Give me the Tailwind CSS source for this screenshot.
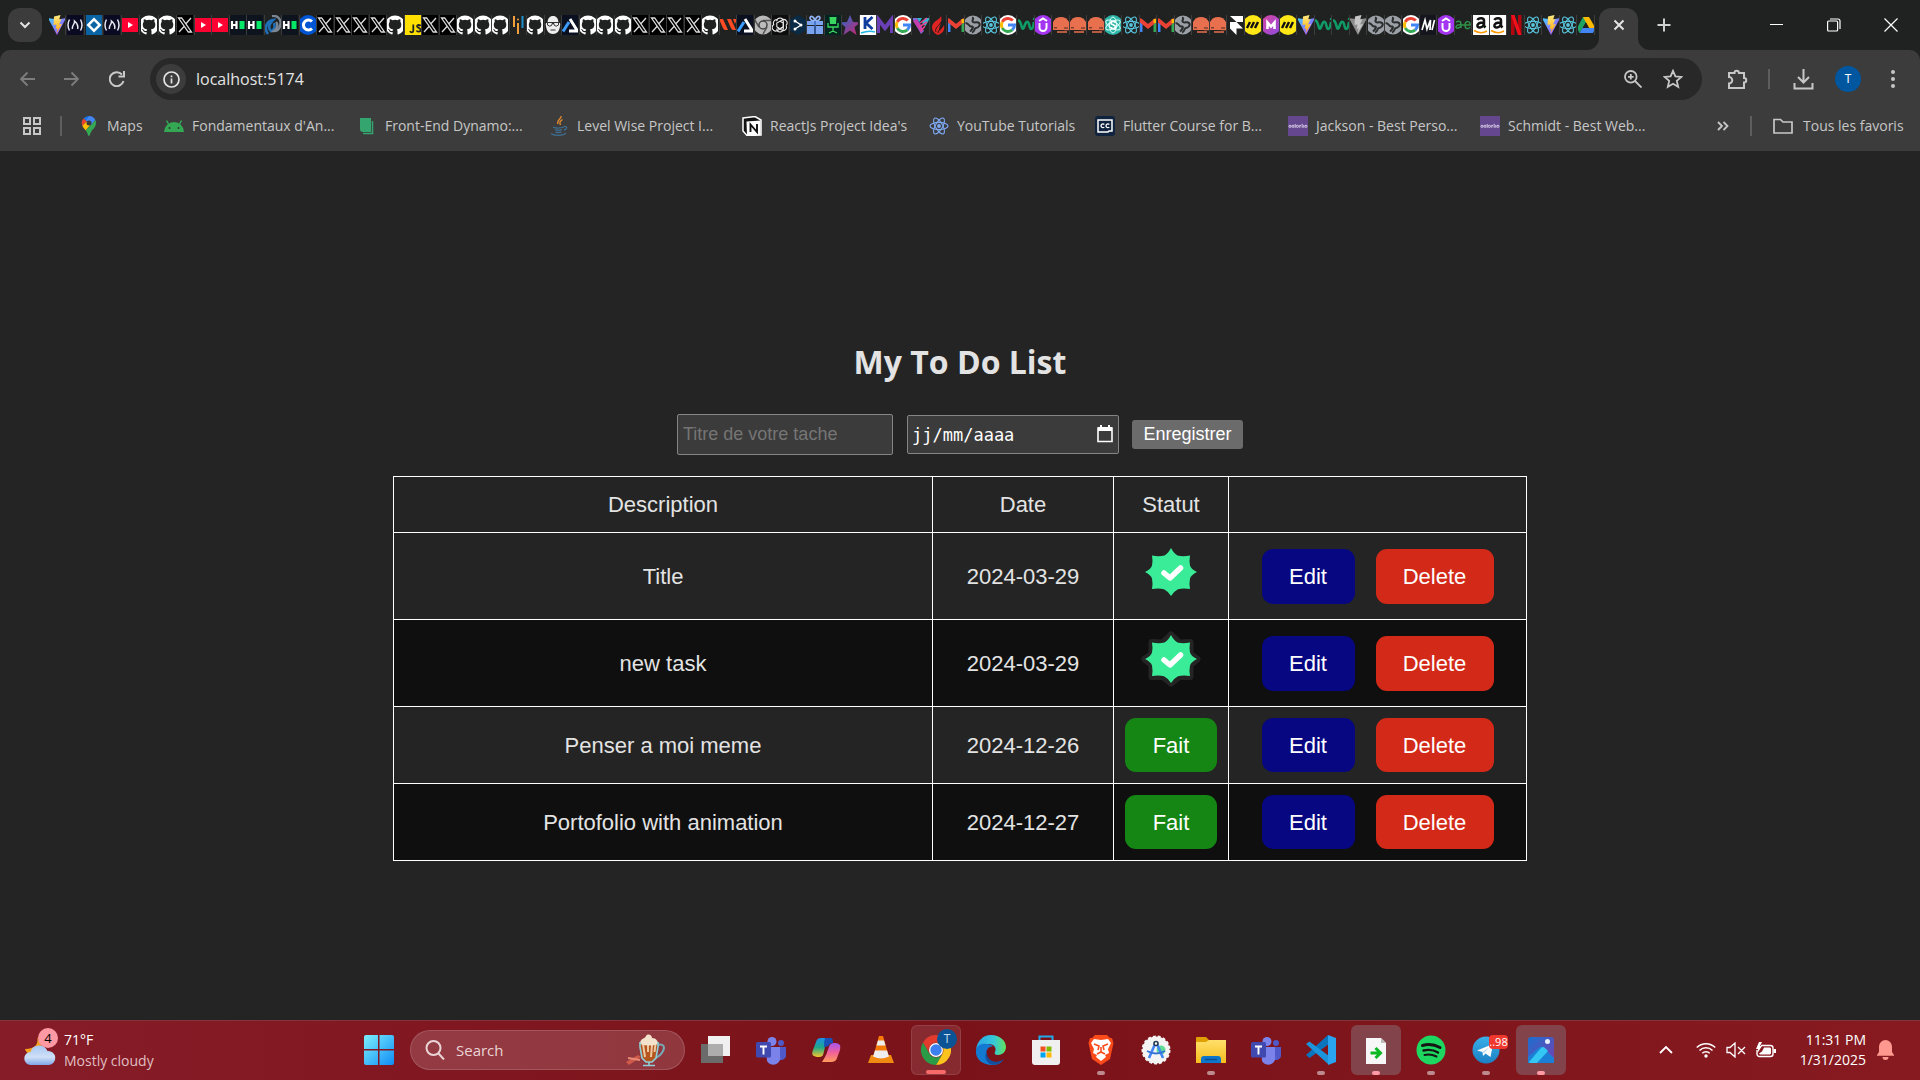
<!DOCTYPE html>
<html lang="fr">
<head>
<meta charset="utf-8">
<title>My To Do List</title>
<script src="https://cdn.jsdelivr.net/npm/@tailwindcss/browser@4"></script>
</head>
<body class="flex min-h-screen flex-col bg-[#242424] font-['Open_Sans','Noto_Sans',sans-serif] text-[#e3e3e3]">

<!-- Shared icon shapes -->
<svg class="absolute size-0" aria-hidden="true">
  <defs>
    <linearGradient id="gv" x1="0" y1="0" x2="1" y2="1"><stop offset="0" stop-color="#41d1ff"/><stop offset="1" stop-color="#bd34fe"/></linearGradient>
    <linearGradient id="gy" x1="0" y1="0" x2="0" y2="1"><stop offset="0" stop-color="#ffea83"/><stop offset="1" stop-color="#ffa800"/></linearGradient>
    <linearGradient id="gm" x1="0" y1="0" x2="1" y2="1"><stop offset="0" stop-color="#d946a0"/><stop offset="1" stop-color="#8b4be0"/></linearGradient>
    <linearGradient id="gs" x1="0" y1="0" x2="1" y2="1"><stop offset="0" stop-color="#1d6fd0"/><stop offset="1" stop-color="#d3206a"/></linearGradient>
    <linearGradient id="gw" gradientUnits="userSpaceOnUse" x1="0" y1="0" x2="30" y2="30"><stop offset="0" stop-color="#7df0fd"/><stop offset="1" stop-color="#0f8cf5"/></linearGradient>
    <linearGradient id="gc" x1="0" y1="0" x2="0" y2="1"><stop offset="0" stop-color="#a9c6f2"/><stop offset=".6" stop-color="#cfe0f7"/><stop offset="1" stop-color="#7fa5e8"/></linearGradient>
    <linearGradient id="gc1" x1="0" y1="0" x2="0" y2="1"><stop offset="0" stop-color="#1c8fe8"/><stop offset=".5" stop-color="#1fa98a"/><stop offset="1" stop-color="#f6c52c"/></linearGradient>
    <linearGradient id="gc2" x1="0" y1="0" x2="0" y2="1"><stop offset="0" stop-color="#a855f0"/><stop offset=".5" stop-color="#f0609a"/><stop offset="1" stop-color="#ff9d5c"/></linearGradient>
    <linearGradient id="ge" x1="0" y1="0" x2="1" y2="0"><stop offset="0" stop-color="#2aa5e8"/><stop offset=".6" stop-color="#35c8d8"/><stop offset="1" stop-color="#62e25a"/></linearGradient>
    <linearGradient id="gp" x1="0" y1="0" x2="1" y2="1"><stop offset="0" stop-color="#1b6fd0"/><stop offset="1" stop-color="#7a3fae"/></linearGradient>
    <linearGradient id="gf" x1="0" y1="0" x2="0" y2="1"><stop offset="0" stop-color="#ffdf6b"/><stop offset="1" stop-color="#f6bd1c"/></linearGradient>
    <linearGradient id="gt" x1="0" y1="0" x2="0" y2="1"><stop offset="0" stop-color="#38b0e8"/><stop offset="1" stop-color="#1b80c4"/></linearGradient>
  </defs>
  <symbol id="vite" viewBox="0 0 20 20"><path d="M1 3 10 20 19 3l-8 1.500z" fill="url(#gv)"/><path d="M13.500 0 7 1.500 6.500 10l3-.6-.8 4.600 2-.6-1.300 5L15 9l-3 .5L14.500 4l-2.300.5z" fill="url(#gy)"/></symbol>
  <symbol id="vitegray" viewBox="0 0 20 20"><path d="M1 3 10 20 19 3l-8 1.500z" fill="#8c8c8c"/><path d="M13.500 0 7 1.500 6.500 10l3-.6-.8 4.600 2-.6-1.300 5L15 9l-3 .5L14.500 4l-2.300.5z" fill="#c6c6c6"/></symbol>
  <symbol id="fcc" viewBox="0 0 20 20"><rect width="20" height="20" fill="#0a0a23"/><path d="M4.500 4.500q-3 5.500 0 11M15.500 4.500q3 5.500 0 11M7.500 14c-1-4 2.500-4 2-8 3 2.500 4 5 3 8" fill="none" stroke="#e8e8f0" stroke-width="1.500"/></symbol>
  <symbol id="code" viewBox="0 0 20 20"><rect width="20" height="20" fill="#0a64a4"/><path d="M10 2.500 17.500 10 10 17.500 2.500 10z" fill="#fff"/><path d="M10 6 14 10l-4 4-4-4z" fill="#0a64a4"/></symbol>
  <symbol id="yt" viewBox="0 0 20 20"><rect y="3" width="20" height="14" rx="2" fill="#f03"/><path d="M8 7v6l5-3z" fill="#fff"/></symbol>
  <symbol id="gh" viewBox="0 0 20 20"><path fill="#fff" d="M10 .4a9.800 9.800 0 0 0-3.100 19.100c.5.1.7-.2.700-.5v-2c-2.700.6-3.300-1.100-3.300-1.100-.4-1.100-1.100-1.400-1.100-1.400-.9-.6.1-.6.1-.6 1 .1 1.500 1 1.500 1 .9 1.500 2.300 1.100 2.900.8.100-.6.300-1.100.600-1.300-2.200-.3-4.500-1.100-4.500-4.900 0-1.100.4-2 1-2.700-.1-.2-.4-1.200.1-2.600 0 0 .8-.3 2.700 1a9.300 9.300 0 0 1 4.900 0c1.900-1.300 2.700-1 2.700-1 .5 1.400.2 2.400.1 2.600.6.7 1 1.600 1 2.700 0 3.800-2.300 4.600-4.500 4.900.4.300.7.900.7 1.800V19c0 .3.200.6.700.5A9.800 9.800 0 0 0 10 .4z"/></symbol>
  <symbol id="xx" viewBox="0 0 20 20"><rect width="20" height="20" fill="#000"/><path d="M3.500 3h3.200L16.500 17h-3.200zM16 3l-5.300 6M9 11.500 4 17" fill="none" stroke="#ddd" stroke-width="1.300"/></symbol>
  <symbol id="hh" viewBox="0 0 20 20"><rect width="20" height="20" fill="#0e141e"/><path d="M4 6v8M8.500 6v8M4 10h4.500" stroke="#fff" stroke-width="2.200"/><path d="M11.500 6h5v8h-5z" fill="#05e868"/></symbol>
  <symbol id="swirl" viewBox="0 0 20 20"><path d="M5 19C1 14 3 6 10 5c-4 4-5 8-2 11 4-1 4-5 3-8" fill="none" stroke="#1f6fb8" stroke-width="2.600"/><path d="M9 1c6-1 10 4 8 10-1 4-4 5-6 5 4-3 4-7 2-9" fill="none" stroke="#7b8794" stroke-width="2.400"/></symbol>
  <symbol id="cc" viewBox="0 0 20 20"><circle cx="10" cy="10" r="10" fill="#0056d2"/><path d="M14 6.500a5 5 0 1 0 0 7" fill="none" stroke="#fff" stroke-width="3"/></symbol>
  <symbol id="js" viewBox="0 0 20 20"><rect width="20" height="20" fill="#ffdf00"/><path d="M10.300 9.500v6.300c0 2-2.600 1.800-3.300.4M17.500 11c-.8-1.500-3.500-1.300-3.500.3 0 1.900 3.600 1.400 3.600 3.700 0 2-3.300 2.300-4.100.5" fill="none" stroke="#222" stroke-width="1.800"/></symbol>
  <symbol id="bars" viewBox="0 0 20 20"><path d="M6 1v11M10 8v11" stroke="#f29f3d" stroke-width="2"/><path d="M14.500 1v12" stroke="#1d8fc9" stroke-width="2"/><circle cx="10" cy="4.500" r="1" fill="#f29f3d"/></symbol>
  <symbol id="goat" viewBox="0 0 20 20"><path d="M10 1c3.500 0 5 2.500 5.500 6 2 1 2 2 1.500 4-.5 5-3 8-7 8s-6.500-3-7-8c-.5-2-.5-3 1.500-4C5 3.500 6.500 1 10 1z" fill="#eee"/><path d="M3 7.500h14M4.500 8v2q2.500 2.500 4.500 0V8.500h2V10q2 2.500 4.500 0V8M7.500 15h5" fill="none" stroke="#333" stroke-width="1"/></symbol>
  <symbol id="ai" viewBox="0 0 20 20"><rect width="20" height="20" fill="#0b1020"/><path d="M10 4 17.500 16H9" fill="none" stroke="#fff" stroke-width="3"/><path d="M9 7 3 16.500" stroke="#3b9dff" stroke-width="3"/></symbol>
  <symbol id="ww" viewBox="0 0 20 20"><path d="M1 4h4l5 11H7q-2-1-3-4zM9 4h4l5 11h-3q-2-1-3-4zM15 4h4l-2 5z" fill="#ff4b24"/></symbol>
  <symbol id="chromeg" viewBox="0 0 20 20"><circle cx="10" cy="10" r="9.500" fill="#b9b9b9"/><path d="M10 5.500h9M6 12 1.500 4.500M14 12l-4.500 8" stroke="#555" stroke-width="1.500"/><circle cx="10" cy="10" r="4" fill="#bbb" stroke="#444" stroke-width="1.500"/></symbol>
  <symbol id="oai" viewBox="0 0 20 20"><rect width="20" height="20" rx="3" fill="#0d0d0d"/><g fill="none" stroke="#e8e8e8" stroke-width="1.100"><path d="M10 3a3.500 3.500 0 0 1 3.300 3.300v5.500L10 13.700l-3.200-1.900V8L13 4.400a3.500 3.500 0 0 1 3 6"/><path d="M10 17a3.500 3.500 0 0 1-3.300-3.300M4 10a3.500 3.500 0 0 1 2.800-5.500M16 10.500a3.500 3.500 0 0 1-3 5.300L7 12.500M10 3a3.500 3.500 0 0 0-3.300 3.300M4 9.500a3.500 3.500 0 0 0 3 6.300L13.300 12M10 17a3.500 3.500 0 0 0 3.300-3.300V8L10 6.200"/></g></symbol>
  <symbol id="hex" viewBox="0 0 20 20"><path d="M10 0l9 5v10l-9 5-9-5V5z" fill="#0b2a45"/><path d="m7 6 6 4-6 4" fill="none" stroke="#fff" stroke-width="1.300"/><g fill="#fff"><circle cx="7" cy="6" r="1.500"/><circle cx="13" cy="10" r="1.500"/><circle cx="7" cy="14" r="1.500"/></g></symbol>
  <symbol id="gift" viewBox="0 0 20 20"><path d="M1 6h18v4H1zM2 11h7v8H2zM11 11h7v8h-7z" fill="#7ba4f0"/><path d="M10 6C4 6 4 1 7 1.500 9 2 10 6 10 6s1-4 3-4.500C16 1 16 6 10 6z" fill="none" stroke="#8fb3f5" stroke-width="1.700"/><path d="M10 6v13" stroke="#3b68bd" stroke-width="1.500"/></symbol>
  <symbol id="chair" viewBox="0 0 20 20"><rect width="20" height="20" fill="#03251f"/><path d="M6.500 2h7L13 9H7z" fill="#3bd65f"/><path d="M5 8v4h10V8M10 12v5M6 18l4-2 4 2" fill="none" stroke="#3bd65f" stroke-width="1.300"/></symbol>
  <symbol id="star" viewBox="0 0 20 20"><path d="m10 0 3 7 7 .5-5.500 4.700L16.500 20 10 15.500 3.500 20l2-7.800L0 7.500 7 7z" fill="url(#gs)"/></symbol>
  <symbol id="kk" viewBox="0 0 20 20"><rect width="20" height="20" fill="#fff"/><path d="M7 2v12M14.500 2 8 8l6.500 6" fill="none" stroke="#0d3b9e" stroke-width="2.800"/><path d="M3 18q8-3 14-1" fill="none" stroke="#21b6e8" stroke-width="1.600"/></symbol>
  <symbol id="mm" viewBox="0 0 20 20"><path d="M3 18V4l7 9 7-9v14" fill="none" stroke="#6b3fb5" stroke-width="4"/></symbol>
  <symbol id="goog" viewBox="0 0 20 20"><circle cx="10" cy="10" r="10" fill="#fff"/><g fill="none" stroke-width="3"><path d="M14.800 5.500A6.500 6.500 0 0 0 4.300 6.900" stroke="#ea4335"/><path d="M4.300 6.900a6.500 6.500 0 0 0 0 6.200" stroke="#fbbc05"/><path d="M4.300 13.100a6.500 6.500 0 0 0 10 1.800" stroke="#34a853"/><path d="M14.300 14.900a6.500 6.500 0 0 0 2.200-4.900H10" stroke="#4285f4"/></g></symbol>
  <symbol id="vv" viewBox="0 0 20 20"><path d="M1 3h5l7 13-3 3z" fill="#7b6bd8"/><path d="m6 3 2.500 4L11 3M11 8l3-5h5l-4.500 8z" fill="#30b8d6"/><path d="m2 6 4-2 6 11-2 3z" fill="#c43fae"/><path d="m9 8 7-5M8 12l8-5M10 16l4-5" stroke="#e8438c" stroke-width="1.500"/></symbol>
  <symbol id="flame" viewBox="0 0 20 20"><path d="M13 0c1 4-9 6-9 12 0 4 3 7 6 8 5-2 7-5 6-10-1 3-3 3-4 6-3-3 3-7 1-16z" fill="#e02424"/><path d="M8 17c-2-4 4-7 5-10M10 18c0-3 3-4 4-7" stroke="#2a1616" fill="none"/></symbol>
  <symbol id="gmail" viewBox="0 0 20 20"><path d="M2.500 17V6" stroke="#4285f4" stroke-width="4"/><path d="M17.500 17V6" stroke="#34a853" stroke-width="4"/><path d="m1.500 4.500 8.500 7 8.500-7" fill="none" stroke="#ea4335" stroke-width="4"/><path d="M17.500 8V4" stroke="#fbbc04" stroke-width="4"/></symbol>
  <symbol id="globe" viewBox="0 0 20 20"><circle cx="10" cy="10" r="9.500" fill="#9aa0a6"/><path d="M9 2.500c3 1-1 3 1 4.500s4-1 6 1-1 5-3 5-1 4-4 4.500M2.500 8c4 0 3 4 6 3.500S9 15 7 16.500" fill="none" stroke="#2a2c2d" stroke-width="2"/></symbol>
  <symbol id="react" viewBox="0 0 20 20"><g fill="none" stroke="currentColor" stroke-width="1.100"><ellipse cx="10" cy="10" rx="9" ry="3.600"/><ellipse cx="10" cy="10" rx="9" ry="3.600" transform="rotate(60 10 10)"/><ellipse cx="10" cy="10" rx="9" ry="3.600" transform="rotate(120 10 10)"/></g><circle cx="10" cy="10" r="1.900" fill="currentColor"/></symbol>
  <symbol id="wg" viewBox="0 0 20 20"><path d="M1 6c2.500-1.500 3.500 1 4.500 5s2 3 3 0 2-5 3.500-4 1.500 7 3 7 2.500-3 3-7" fill="none" stroke="#109a66" stroke-width="2.600"/><circle cx="18" cy="4" r="1.200" fill="#109a66"/></symbol>
  <symbol id="uu" viewBox="0 0 20 20"><circle cx="10" cy="10" r="10" fill="#a435f0"/><path d="M6.500 8v4.500a3.500 3.500 0 0 0 7 0V8M6 6l4-2.500L14 6" fill="none" stroke="#fff" stroke-width="2"/></symbol>
  <symbol id="ph" viewBox="0 0 20 20"><path d="M2 15C-1 8 4 2 10 2s11 6 8 13z" fill="#e8704e"/><path d="M1 14h11M13 14.500h6M6 17h10" stroke="#e8704e" stroke-width="1.500"/><path d="M3 12.800h3M13 13h4" stroke="#4b2a22" stroke-width="1"/></symbol>
  <symbol id="sb" viewBox="0 0 20 20"><circle cx="10" cy="10" r="10" fill="#2cb5a6"/><g fill="none" stroke="#d9fff9" stroke-width="1"><ellipse cx="10" cy="10" rx="8" ry="3.500" transform="rotate(30 10 10)"/><ellipse cx="10" cy="10" rx="8" ry="3.500" transform="rotate(-30 10 10)"/><ellipse cx="10" cy="10" rx="3.500" ry="8"/></g><path d="M12.500 7.500c-1-1.500-4.500-1.500-4.500.5s4.500 1.500 4.500 4-4 2-5 .3" fill="none" stroke="#fff" stroke-width="1.800"/></symbol>
  <symbol id="framer" viewBox="0 0 20 20"><path d="M4 1h13v6h-6.500zM4 7h6.500l6.500 6.500h-6.500V20L4 13.500z" fill="#fff"/></symbol>
  <symbol id="miro" viewBox="0 0 20 20"><circle cx="10" cy="10" r="10" fill="#ffe815"/><path d="m4 13 3-6M8 13l3-6M12 13l3-6" stroke="#111" stroke-width="2.400"/></symbol>
  <symbol id="mc" viewBox="0 0 20 20"><circle cx="10" cy="10" r="10" fill="url(#gm)"/><path d="M6.500 14V7.500l3.500 4 3.500-4V14" fill="none" stroke="#fff" stroke-width="2.600"/></symbol>
  <symbol id="mk" viewBox="0 0 20 20"><rect width="20" height="20" fill="#15151d"/><path d="m4 15 3-10 2 9 3.500-9L12 15M14 15l2.500-10" fill="none" stroke="#fff" stroke-width="1.700"/></symbol>
  <symbol id="ae" viewBox="0 0 20 20"><path d="M3 7c5-2 5 0 5 6M8 10c-6-1-6 4-3 3s3-1 3-3M12 10h5c1-4-5-5-5 0s4 4 5 2M8 10h4" fill="none" stroke="#2f9147" stroke-width="1.500"/></symbol>
  <symbol id="az" viewBox="0 0 20 20"><rect width="20" height="20" fill="#fff"/><path d="M6.500 5c1-2.500 6.500-2.500 6.500.5V11l1.500 1.500M13 7.500c-8-.5-8 5.500-4 5 2.500-.3 4-2 4-5" fill="none" stroke="#111" stroke-width="2.500"/><path d="M3 15.500q7 4 13 .5" fill="none" stroke="#ff9900" stroke-width="1.500"/></symbol>
  <symbol id="nf" viewBox="0 0 20 20"><path d="M5 0h3.500v20H5zM12 0h3.500v20H12z" fill="#b1060f"/><path d="M5 0h3.500l7 20H12z" fill="#f0101c"/></symbol>
  <symbol id="drive" viewBox="0 0 20 20"><path d="M7 2h6l-9.500 16L1 13z" fill="#1fa463"/><path d="M7 2h6l6.500 11H13z" fill="#ffba00"/><path d="M6.500 13h13L17 18H3.500z" fill="#4285f4"/><path d="M10 7.500 13 13H6.800z" fill="#202221"/></symbol>
  <symbol id="colorlib" viewBox="0 0 20 20"><path d="M0 0h20v20H0z" fill="#65478f"/><g fill="none" stroke="#efe9f7" stroke-width=".8"><circle cx="2" cy="10.300" r="1.100"/><circle cx="5" cy="10.300" r="1.100"/><path d="M7.200 8v3.800"/><circle cx="9.400" cy="10.300" r="1.100"/><path d="M11.800 9v2.800M11.800 9.700l1.300-.6M14.200 7.800v4M15.800 9v2.800"/><circle cx="18" cy="10.300" r="1.100"/></g></symbol>
  <symbol id="teams" viewBox="0 0 30 30"><circle cx="16" cy="6.500" r="4.500" fill="#7b83eb"/><circle cx="25" cy="8" r="3" fill="#5059c9"/><path d="M22 12h8v9a5 5 0 0 1-8 3z" fill="#5059c9"/><path d="M10 12h14v9a7 7 0 0 1-13 5z" fill="#7b83eb"/><rect y="7" width="15" height="15.500" rx="1.500" fill="#4049b0"/><path d="M4 11.500h7M7.500 11.500v8" stroke="#fff" stroke-width="1.900"/></symbol>
  <symbol id="badge" viewBox="0 0 60 62"><path d="M30 7l8 8 11-.5V26l7 5-7 6v11.500H38L30 55l-8-6.500H11V37l-7-6 7-5V14.500l11 .5z" fill="#242424" stroke="#242424" stroke-width="7" stroke-linejoin="round"/><path d="M30 7q3 5.500 6.500 7.500Q42 16 49 14.500q-1 6 0 10Q50 28 56 31q-6 3-7 6.500-1 5 0 10.500-7-1.300-12 .3-4 2-7 6.700-3-4.700-7-6.700-5-1.600-12-.3 1-5.500 0-10.500Q10 34 4 31q6-3 7-6.500 1-4 0-10 7 1.500 12.500 0Q27 12.500 30 7z" fill="#3aeb97"/><path d="m23 32 6 5 10.500-10" fill="none" stroke="#fff" stroke-width="5.500" stroke-linecap="round" stroke-linejoin="round"/></symbol>
</svg>

<header>
  <!-- Tab strip -->
  <div class="flex h-[50px] items-center bg-[#202221]">
    <button aria-label="Rechercher dans les onglets" class="ml-2 grid size-[34px] shrink-0 place-items-center rounded-xl bg-[#3c3c3c]"><svg class="size-3" viewBox="0 0 12 12" fill="none" stroke="#e3e3e3" stroke-width="2"><path d="m1.500 3.500 4.500 4.500 4.500-4.500"/></svg></button>
    <div id="pinned" class="ml-[6px] grid w-[129px] shrink-0 auto-cols-fr grid-flow-col"></div>
    <div id="tabs" class="mr-1 grid min-w-0 flex-1 auto-cols-fr grid-flow-col"></div>
    <div class="flex w-[39px] shrink-0 self-stretch pt-2">
      <button aria-label="Fermer l'onglet" class="relative grid flex-1 place-items-center rounded-t-xl bg-[#3c3c3c] pb-2">
        <svg class="absolute bottom-0 -left-3 size-3" viewBox="0 0 12 12"><path d="M12 0v12H0A12 12 0 0 0 12 0z" fill="#3c3c3c"/></svg>
        <svg class="absolute -right-3 bottom-0 size-3" viewBox="0 0 12 12"><path d="M0 0v12h12A12 12 0 0 1 0 0z" fill="#3c3c3c"/></svg>
        <svg class="size-3" viewBox="0 0 12 12" stroke="#e3e3e3" stroke-width="2"><path d="m1.500 1.500 9 9m0-9-9 9"/></svg>
      </button>
    </div>
    <button aria-label="Nouvel onglet" class="ml-2 grid size-9 shrink-0 place-items-center"><svg class="size-4" viewBox="0 0 16 16" stroke="#d0d0d0" stroke-width="2"><path d="M8 1.500v13M1.500 8h13"/></svg></button>
    <div class="ml-[66px] flex shrink-0 self-stretch">
      <button aria-label="Réduire" class="grid w-[57px] place-items-center"><svg class="size-[14px]" viewBox="0 0 14 14" stroke="#fff"><path d="M0 6.500h13"/></svg></button>
      <button aria-label="Restaurer" class="grid w-[57px] place-items-center"><svg class="size-[14px]" viewBox="0 0 14 14" fill="none" stroke="#fff" stroke-width="1.200"><rect x=".6" y="3" width="10" height="10" rx="1"/><path d="M3 1h8a2 2 0 0 1 2 2v8"/></svg></button>
      <button aria-label="Fermer" class="grid w-[58px] place-items-center"><svg class="size-[14px]" viewBox="0 0 14 14" stroke="#fff" stroke-width="1.200"><path d="m.5.5 13 13m0-13-13 13"/></svg></button>
    </div>
  </div>

  <!-- Address bar -->
  <div class="bg-[#202221]">
  <div class="flex h-[58px] items-center rounded-t-[10px] bg-[#3c3c3c] pr-1 pl-1">
    <button aria-label="Retour" class="grid w-[45px] place-items-center"><svg class="size-4" viewBox="0 0 16 16" fill="none" stroke="#7d7d7d" stroke-width="1.800"><path d="M16 8H2M8.500 1.500 2 8l6.500 6.500"/></svg></button>
    <button aria-label="Avancer" class="grid w-[45px] place-items-center"><svg class="size-4" viewBox="0 0 16 16" fill="none" stroke="#7d7d7d" stroke-width="1.800"><path d="M0 8h14M7.500 1.500 14 8l-6.500 6.500"/></svg></button>
    <button aria-label="Actualiser" class="grid w-[45px] place-items-center"><svg class="size-4" viewBox="0 0 16 16" fill="none" stroke="#c9c9c9" stroke-width="2"><path d="M13 3.500A7 7 0 1 0 14.500 10"/><path d="M9.500 5.500H15V0"/></svg></button>
    <div class="ml-[11px] flex h-[42px] min-w-0 flex-1 items-center rounded-full bg-[#282828] pr-[18px] pl-[6px]">
      <button aria-label="Informations sur le site" class="grid size-[30px] shrink-0 place-items-center rounded-full bg-[#3c3c3c]"><svg class="size-[17px]" viewBox="0 0 17 17" fill="none" stroke="#e3e3e3" stroke-width="1.700"><circle cx="8.500" cy="8.500" r="7.500"/><path d="M8.500 7.500v5M8.500 4.500v1.700"/></svg></button>
      <input aria-label="Adresse" value="localhost:5174" class="ml-[10px] min-w-0 flex-1 bg-transparent text-base text-[#e3e3e3] outline-none">
      <button aria-label="Zoom" class="grid w-[41px] place-items-center"><svg class="size-[18px]" viewBox="0 0 18 18" fill="none" stroke="#c7c7c7" stroke-width="1.800"><circle cx="6.800" cy="6.800" r="5.800"/><path d="m11 11 6.500 6.500M4 6.800h5.600M6.800 4v5.600"/></svg></button>
      <button aria-label="Ajouter aux favoris" class="ml-2 grid w-[23px] place-items-center"><svg class="size-5" viewBox="0 0 20 20" fill="none" stroke="#c7c7c7" stroke-width="1.800"><path d="m10 1.800 2.400 5.600 6 .5-4.600 4 1.400 5.900-5.200-3.100-5.200 3.100 1.400-5.900-4.600-4 6-.5z"/></svg></button>
    </div>
    <button aria-label="Extensions" class="ml-3 grid w-[46px] place-items-center"><svg class="size-[21px]" viewBox="0 0 21 21" fill="none" stroke="#c7c7c7" stroke-width="2"><path d="M2 4h5.500a2.200 2.200 0 0 1 4.400 0H17v5a2.200 2.200 0 0 1 0 4.500V19H2v-4.500a3.200 3.200 0 0 0 0-6.500z"/></svg></button>
    <span class="ml-2 h-5 w-0.5 bg-[#5e5e5e]"></span>
    <button aria-label="Téléchargements" class="ml-[10px] grid w-[46px] place-items-center"><svg class="size-[21px]" viewBox="0 0 21 21" fill="none" stroke="#c7c7c7" stroke-width="2"><path d="M10.500 0v13M5 8l5.500 5.500L16 8M1.500 14v5.500h18V14"/></svg></button>
    <button class="ml-[9px] grid size-[26px] place-items-center rounded-full bg-[#0057a0] text-xs text-white">T</button>
    <button aria-label="Menu" class="ml-[9px] grid w-[46px] place-items-center"><svg class="h-5 w-1" viewBox="0 0 4 20" fill="#c7c7c7"><circle cx="2" cy="3" r="2"/><circle cx="2" cy="10" r="2"/><circle cx="2" cy="17" r="2"/></svg></button>
  </div>
  </div>

  <!-- Bookmarks bar -->
  <nav class="flex h-[43px] items-center bg-[#3c3c3c] pr-[18px] pb-[7px] pl-[23px] text-sm whitespace-nowrap text-[#c7c7c7]">
    <button aria-label="Groupes d'onglets"><svg class="size-[18px]" viewBox="0 0 18 18" fill="none" stroke="#c7c7c7" stroke-width="2"><path d="M1 1h6v6H1zM11 1h6v6h-6zM1 11h6v6H1zM11 11h6v6h-6z"/></svg></button>
    <span class="ml-[19px] h-5 w-0.5 bg-[#5e5e5e]"></span>
    <div class="ml-[17px] flex gap-5">
      <a href="#" class="flex items-center gap-2"><svg class="size-5" viewBox="0 0 20 20"><path d="M10 0a7 7 0 0 0-5.500 2.500L8 5.500z" fill="#1a73e8"/><path d="M4.500 2.500A7 7 0 0 0 3.300 9.800L8 5.500z" fill="#ea4335"/><path d="M3.300 9.800C4 11.500 5.500 13 6.700 14.500l5.600-6.800-4.600-2.200z" fill="#fbbc04"/><path d="M6.700 14.500C9 17.500 9 20 10 20s1-3 3-5.500 4-4 4-7.500c0-1-.2-2-.7-3z" fill="#34a853"/><path d="M10 0a7 7 0 0 1 6.300 4l-4.500 5L7 4.500z" fill="#4285f4"/><circle cx="10" cy="7" r="2.500" fill="#3c3c3c"/></svg><span class="w-[37px]">Maps</span></a>
      <a href="#" class="flex items-center gap-2"><svg class="size-5" viewBox="0 0 20 20"><path d="M0 16a10 10 0 0 1 20 0z" fill="#34a853"/><path d="m5 9-2.500-4.500M15 9l2.500-4.500" stroke="#34a853" stroke-width="1.500"/><circle cx="5.500" cy="12" r="1" fill="#333"/><circle cx="14.500" cy="12" r="1" fill="#333"/></svg><span class="w-[145px]">Fondamentaux d'An...</span></a>
      <a href="#" class="flex items-center gap-2"><svg class="size-5" viewBox="0 0 20 20"><path d="M3 2h11v14H6a3 3 0 0 1-3-3z" fill="#35a56f"/><path d="M15.500 5v12.500H6" fill="none" stroke="#35a56f" stroke-width="1.500"/></svg><span class="w-[144px]">Front-End Dynamo:...</span></a>
      <a href="#" class="flex items-center gap-2"><svg class="size-5" viewBox="0 0 20 20" fill="none"><path d="M12 0c1 3-5 4-3 8M13.500 3.500c-3 2-3 3-2 5.500" stroke="#e08a2e" stroke-width="1.400"/><path d="M4 11c3 1.500 8 1 11 0M6 13.500c2 1 5 1 7 0M6.500 15.800c2 1 4 1 6 0M2 17.500c3 2.500 12 2.500 15-.5M15 10.500c4-.5 3 3 0 3.500" stroke="#3f6f92" stroke-width="1.300"/></svg><span class="w-[145px]">Level Wise Project I...</span></a>
      <a href="#" class="flex items-center gap-2"><svg class="size-5" viewBox="0 0 20 20"><path d="m1 2 12-1.500L19 4v15L5 19.500 1 15z" fill="#111" stroke="#fff" stroke-width="1.500"/><path d="M4.500 5.500 18.500 4.500V19L5 19.500z" fill="#fff"/><path d="M8.500 16V8.500L15 16V8" fill="none" stroke="#111" stroke-width="1.900"/></svg><span class="w-[139px]">ReactJs Project Idea's</span></a>
      <a href="#" class="flex items-center gap-2"><svg class="size-5 text-[#7fa9f5]"><use href="#react"/></svg><span class="w-[118px]">YouTube Tutorials</span></a>
      <a href="#" class="flex items-center gap-2"><svg class="size-5" viewBox="0 0 20 20"><rect width="20" height="20" rx="3" fill="#10233f"/><path d="M3 4h14v11h-3l-1 1H3z" fill="none" stroke="#fff" stroke-width="1.500"/><path d="M9.300 8.500a1.900 1.900 0 1 0 0 2.600M14.300 8.500a1.900 1.900 0 1 0 0 2.600" fill="none" stroke="#fff" stroke-width="1.300"/></svg><span class="w-[145px]">Flutter Course for B...</span></a>
      <a href="#" class="flex items-center gap-2"><svg class="size-5"><use href="#colorlib"/></svg><span class="w-[144px]">Jackson - Best Perso...</span></a>
      <a href="#" class="flex items-center gap-2"><svg class="size-5"><use href="#colorlib"/></svg><span class="w-[144px]">Schmidt - Best Web...</span></a>
    </div>
    <button aria-label="Autres favoris" class="ml-auto"><svg class="size-3" viewBox="0 0 12 12" fill="none" stroke="#c7c7c7" stroke-width="1.800"><path d="m1 2 4 4-4 4M6.500 2l4 4-4 4"/></svg></button>
    <span class="ml-[21px] h-5 w-0.5 bg-[#5e5e5e]"></span>
    <a href="#" class="ml-[21px] flex items-center gap-[10px]"><svg class="h-4 w-5" viewBox="0 0 20 16" fill="none" stroke="#c7c7c7" stroke-width="1.700"><path d="M1 1.500h6.500L10 4h9v11H1z"/></svg><span class="w-[99px]">Tous les favoris</span></a>
  </nav>
</header>

<!-- To-do application -->
<main class="flex flex-1 flex-col items-center justify-center pt-[26px] font-['Liberation_Sans',Arial,sans-serif]">
  <h1 class="font-['Open_Sans','Noto_Sans',sans-serif] text-[32px] leading-[52px] font-bold">My To Do List</h1>
  <form class="mt-[26px] flex items-center text-lg leading-[27px]">
    <input type="text" aria-label="Titre de votre tache" placeholder="Titre de votre tache" class="h-[41px] w-[216px] rounded-[2px] border border-[#858585] bg-[#3b3b3b] px-[5px] text-white placeholder:text-[#757575]">
    <span class="relative ml-[14px] flex">
      <input type="text" aria-label="Date" value="jj/mm/aaaa" class="h-[39px] w-[212px] rounded-[2px] border border-[#858585] bg-[#3b3b3b] px-1 font-['DejaVu_Sans_Mono',monospace] text-[17px] text-white">
      <svg class="absolute top-[10px] right-[6px] h-[18px] w-4" viewBox="0 0 16 18"><path d="M1 3h14v13.500H1z" fill="none" stroke="#fff" stroke-width="1.600"/><path d="M1 2h14v4H1zM3 0h2v3H3zM11 0h2v3h-2z" fill="#fff"/></svg>
    </span>
    <button type="button" class="ml-[13px] h-[29px] w-[111px] rounded-[3px] bg-[#6b6b6b] text-white">Enregistrer</button>
  </form>
  <table class="mt-[21px] w-full max-w-[1134px] table-fixed border-collapse text-center text-[22px] leading-[33px]">
    <colgroup><col><col class="w-[181px]"><col class="w-[115px]"><col class="w-[298px]"></colgroup>
    <thead>
      <tr class="h-14"><th class="border border-white font-normal">Description</th><th class="border border-white font-normal">Date</th><th class="border border-white font-normal">Statut</th><td class="border border-white"></td></tr>
    </thead>
    <tbody>
      <tr class="h-[87px]"><td class="border border-white">Title</td><td class="border border-white">2024-03-29</td>
        <td class="border border-white"><svg role="img" aria-label="Fait" class="mx-auto mb-2 h-[62px] w-[60px]"><use href="#badge"/></svg></td>
        <td class="border border-white"><div class="flex justify-center gap-[21px] text-white"><button class="h-[55px] w-[93px] rounded-[11px] bg-[#070781]">Edit</button><button class="h-[55px] w-[118px] rounded-[11px] bg-[#d32918]">Delete</button></div></td></tr>
      <tr class="h-[87px] bg-[#0f0f0f]"><td class="border border-white">new task</td><td class="border border-white">2024-03-29</td>
        <td class="border border-white"><svg role="img" aria-label="Fait" class="mx-auto mb-2 h-[62px] w-[60px]"><use href="#badge"/></svg></td>
        <td class="border border-white"><div class="flex justify-center gap-[21px] text-white"><button class="h-[55px] w-[93px] rounded-[11px] bg-[#070781]">Edit</button><button class="h-[55px] w-[118px] rounded-[11px] bg-[#d32918]">Delete</button></div></td></tr>
      <tr class="h-[77px]"><td class="border border-white">Penser a moi meme</td><td class="border border-white">2024-12-26</td>
        <td class="border border-white"><button class="h-[54px] w-[92px] rounded-[11px] bg-[#158613] align-middle text-white">Fait</button></td>
        <td class="border border-white"><div class="flex justify-center gap-[21px] text-white"><button class="h-[54px] w-[93px] rounded-[11px] bg-[#070781]">Edit</button><button class="h-[54px] w-[118px] rounded-[11px] bg-[#d32918]">Delete</button></div></td></tr>
      <tr class="h-[77px] bg-[#0f0f0f]"><td class="border border-white">Portofolio with animation</td><td class="border border-white">2024-12-27</td>
        <td class="border border-white"><button class="h-[54px] w-[92px] rounded-[11px] bg-[#158613] align-middle text-white">Fait</button></td>
        <td class="border border-white"><div class="flex justify-center gap-[21px] text-white"><button class="h-[54px] w-[93px] rounded-[11px] bg-[#070781]">Edit</button><button class="h-[54px] w-[118px] rounded-[11px] bg-[#d32918]">Delete</button></div></td></tr>
    </tbody>
  </table>
</main>

<!-- Taskbar -->
<footer class="grid h-[60px] grid-cols-[1fr_auto_1fr] items-center border-t border-[#84333a] bg-linear-to-r from-[#861c27] via-[#7a1219] to-[#861a20] pb-px text-[15px] leading-[21px]">
  <button class="relative flex items-center gap-2 justify-self-start pl-6 text-left">
    <svg class="h-8 w-8" viewBox="0 0 32 32"><path d="M13 3c2 7-2 12-12 12 1 6 14 10 18 0z" fill="#f6a21d"/><path d="M7 31a6.500 6.500 0 0 1-.5-13A9 9 0 0 1 23.500 17 7 7 0 0 1 25 31z" fill="url(#gc)"/></svg>
    <span class="absolute -top-[1px] left-[38px] grid size-5 place-items-center rounded-full bg-[#ff99a3] text-[13px] text-black">4</span>
    <span><span class="block text-sm leading-[21px] text-white">71°F</span><span class="block text-sm leading-[21px] text-[#e0bfc3]">Mostly cloudy</span></span>
  </button>

  <div class="flex items-center gap-[5px]">
    <button aria-label="Start" class="grid size-[50px] place-items-center"><svg class="size-[30px]" viewBox="0 0 30 30" fill="url(#gw)"><path d="M2 0h12v14H0V2a2 2 0 0 1 2-2zM15.500 0H28a2 2 0 0 1 2 2v12H15.500zM0 15.500h14V30H2a2 2 0 0 1-2-2zM15.500 15.500H30V28a2 2 0 0 1-2 2H15.500z"/></svg></button>
    <label class="mx-px flex h-10 w-[275px] items-center rounded-full border border-white/15 bg-white/15 pr-[18px] pl-[14px]">
      <svg class="size-5 shrink-0" viewBox="0 0 20 20" fill="none" stroke="#ead4d6" stroke-width="2"><circle cx="8.500" cy="8" r="7"/><path d="m13.500 13.500 5.500 6"/></svg>
      <input type="text" aria-label="Search" placeholder="Search" class="ml-[11px] min-w-0 flex-1 bg-transparent text-[15px] outline-none placeholder:text-[#ead4d6]">
      <svg class="h-[34px] w-10" viewBox="0 0 40 34"><path d="m0 29 12-7 3 2-12 8z" fill="#cf5a4a"/><path d="m2 25 12 2" stroke="#e88a74" stroke-width="2"/><path d="M31 12c7-2 8 2 6 6s-5 6-8 7" fill="none" stroke="#76a9b4" stroke-width="2"/><path d="M14 9h18l-2 16-4 4h-6l-4-4z" fill="#b5561f"/><path d="m17 11 2 13M22 11v8M26 12l-1 12M29.500 11l-1 8" stroke="#eec9a0" stroke-width="2"/><path d="M14 11C14 5 19 6 20 3c2-3 6-1 6 2 4 0 6 3 6 6q-9 3-18 0z" fill="#f4e3cc"/><path d="M14 9v5l2 11 4 4h6l4-4 2-11V9M23 29v3M17 32.500h12" fill="none" stroke="#8fd0d8" stroke-width="1.600"/></svg>
    </label>
    <button aria-label="Task view" class="grid size-[50px] place-items-center"><svg class="size-[30px]" viewBox="0 0 30 30"><path d="M0 9h22v19H0z" fill="#6b6b6b"/><path d="M7 1h22v20H7z" fill="#f0f0f0"/><path d="M7 9h15v12H7z" fill="#adadad"/></svg></button>
    <button aria-label="Teams" class="grid size-[50px] place-items-center"><svg class="size-[30px]"><use href="#teams"/></svg></button>
    <button aria-label="Copilot" class="grid size-[50px] place-items-center"><svg class="size-[30px]" viewBox="0 0 30 30"><path d="M10 3h10l-3 5-4 10q-1 4-5 4c-6 0-8-2-6-7l3-8q1-4 5-4z" fill="url(#gc1)"/><path d="M20 27H11l3-5 4-10q1-4 5-4c6 0 7 2 6 7l-3 8q-1 4-6 4z" fill="url(#gc2)"/><path d="m14 3 6 0q2 0 2 5-4 0-5 4l-4 0q0-6 1-9z" fill="#1850b8"/><path d="m14 12 3.500-1-2.500 9-3 1z" fill="#7a1219"/></svg></button>
    <button aria-label="VLC" class="grid size-[50px] place-items-center"><svg class="size-[30px]" viewBox="0 0 30 30"><path d="M5 20h20l3 8H2z" fill="#f08a11"/><path d="M13 1h4l6 21q-8 4-16 0z" fill="#f47a0a"/><path d="M12 5.500h6l1.500 5h-9zM9 15.500h12l2 6q-8 4-16 0z" fill="#eee"/></svg></button>
    <button aria-label="Chrome" class="relative grid size-[50px] place-items-center rounded-md border border-white/10 bg-white/10"><svg class="size-[30px]" viewBox="0 0 30 30"><path d="M2 7.500a15 15 0 0 1 26 0H15a7.500 7.500 0 0 0-6.500 11z" fill="#e23b2e"/><path d="M28 7.500A15 15 0 0 1 15 30l6.500-11.300A7.500 7.500 0 0 0 15 7.500z" fill="#fcc31e"/><path d="M2 7.500A15 15 0 0 0 15 30l6.500-11.300a7.500 7.500 0 0 1-13 0z" fill="#2a9b47"/><circle cx="15" cy="15" r="7" fill="#fff"/><circle cx="15" cy="15" r="5.700" fill="#3c7ff0"/></svg><span class="absolute top-[3px] right-[3px] grid size-5 place-items-center rounded-full bg-[#0b5394] text-xs text-[#c9dced]">T</span><span class="absolute bottom-0 left-[14px] h-1 w-5 rounded-full bg-[#f76a68]"></span></button>
    <button aria-label="Edge" class="grid size-[50px] place-items-center"><svg class="size-[30px]" viewBox="0 0 30 30"><path d="M0 15C1 6 7 0 15 0c9 0 15 6 15 12 0 5-4 8-8 8-3 0-4-1-3-3 2-4-1-8-6-8C6 9 1 12 0 15z" fill="url(#ge)"/><path d="M0 15c1-4 5-7 11-6 3 0 5 1 6 3-5-1-8 4-6 9 2 6 8 8 15 5-2 3-6 4-10 4C6 30-1 24 0 15z" fill="#1479d1"/><path d="M11 17c-1 8 8 13 17 7-3 5-9 7-14 5-5-3-6-9-3-12z" fill="#144f9e"/></svg></button>
    <button aria-label="Store" class="grid size-[50px] place-items-center"><svg class="size-[30px]" viewBox="0 0 30 30"><path d="M8.500 6V1.500h13V6" fill="none" stroke="#22a9e8" stroke-width="2"/><path d="M1 5h28v22a3 3 0 0 1-3 3H4a3 3 0 0 1-3-3z" fill="#f0f0f0"/><path d="M9.500 11.500h5v5h-5z" fill="#f25022"/><path d="M15.500 11.500h5v5h-5z" fill="#7fba00"/><path d="M9.500 17.500h5v5h-5z" fill="#00a4ef"/><path d="M15.500 17.500h5v5h-5z" fill="#ffb900"/></svg></button>
    <button aria-label="Brave" class="relative grid size-[50px] place-items-center"><svg class="size-[30px]" viewBox="0 0 30 30"><path d="M9 0h12l3 3h2l1.500 5-3.500 16-9 6-9-6L2.500 8 4 3h2z" fill="#fb4b1b"/><path d="M15 5l7-1 3 4-3 6 1 4-4 2 1 2-5 4-5-4 1-2-4-2 1-4-3-6 3-4z" fill="#fff"/><path d="m8 9 5 2-1 4M22 9l-5 2 1 4M11 19l4-2 4 2M15 17v-5" fill="none" stroke="#fb4b1b" stroke-width="1.600"/></svg><span class="absolute bottom-0 h-1 w-2 rounded-full bg-[#bd8a8e]"></span></button>
    <button aria-label="Android Studio" class="grid size-[50px] place-items-center"><svg class="size-[30px]" viewBox="0 0 30 30"><circle cx="15" cy="15" r="13.500" fill="#f4f4f4" stroke="#f4f4f4" stroke-width="2" stroke-dasharray="3 2"/><circle cx="20" cy="15" r="4.500" fill="#5fdc96"/><path d="M14.500 8 8 23M15.500 8 22 23" stroke="#4285f4" stroke-width="2.600"/><path d="M6 16q9 5 18 0" fill="none" stroke="#3572d8" stroke-width="1.800"/><circle cx="15" cy="8.500" r="2" fill="#fff" stroke="#253b50" stroke-width="1.600"/></svg></button>
    <button aria-label="Explorer" class="relative grid size-[50px] place-items-center"><svg class="size-[30px]" viewBox="0 0 30 30"><path d="M0 3q0-1 1-1h9l3 3v4H0z" fill="#e0a100"/><path d="M0 7h10l3-2h17v23H0z" fill="url(#gf)"/><path d="M5 28v-4q0-3 3-3h14q3 0 3 3v4z" fill="#0f77c9"/><path d="M9 24.500h12" stroke="#0a4d90" stroke-width="1.500"/></svg><span class="absolute bottom-0 h-1 w-2 rounded-full bg-[#bd8a8e]"></span></button>
    <button aria-label="Teams" class="grid size-[50px] place-items-center"><svg class="size-[30px]"><use href="#teams"/></svg></button>
    <button aria-label="Visual Studio Code" class="relative grid size-[50px] place-items-center"><svg class="size-[30px]" viewBox="0 0 30 30"><path d="m0 20 22-20 1 9L3.500 23z" fill="#0a74bd"/><path d="m0 9 3.500-2.500L23 21l-1 8z" fill="#1c94dc"/><path d="m22 0 8 3v24l-8 3z" fill="#2aa4ef"/></svg><span class="absolute bottom-0 h-1 w-2 rounded-full bg-[#bd8a8e]"></span></button>
    <button aria-label="Document" class="relative grid size-[50px] place-items-center rounded-md bg-[#83434a]"><svg class="size-[30px]" viewBox="0 0 30 30"><path d="M5 3h15l5 5v21H5z" fill="#f7f7f7"/><path d="M20 3v5h5z" fill="#bbb"/><path d="M9.500 18h9M14.500 13l5 5-5 5" fill="none" stroke="#0cb822" stroke-width="3"/></svg><span class="absolute bottom-0 h-1 w-2 rounded-full bg-[#ff99a3]"></span></button>
    <button aria-label="Spotify" class="relative grid size-[50px] place-items-center"><svg class="size-[30px]" viewBox="0 0 30 30" fill="none" stroke="#151515" stroke-linecap="round"><circle cx="15" cy="15" r="14.500" fill="#1ed760" stroke="none"/><path d="M6.500 10.500q9-2.500 17.500 2" stroke-width="3"/><path d="M7.500 15.500q8-2 14.500 2" stroke-width="2.400"/><path d="M8.500 20q6-1.500 12 1.500" stroke-width="2"/></svg><span class="absolute bottom-0 h-1 w-2 rounded-full bg-[#bd8a8e]"></span></button>
    <button aria-label="Telegram" class="relative grid size-[50px] place-items-center"><svg class="size-[30px]" viewBox="0 0 30 30"><circle cx="15" cy="15" r="13.500" fill="url(#gt)"/><path d="M6 15.500 22 9l-2.500 13-5-3.500-2.500 2.500-.5-4z" fill="#fff"/><path d="m11.500 17 7-5-5.500 6z" fill="#b8d4e8"/></svg><span class="absolute top-[10px] left-[28px] h-[14px] w-[19px] rounded-sm bg-[#f0382f] text-center text-[11px] leading-[14px] text-white">..98</span><span class="absolute bottom-0 h-1 w-2 rounded-full bg-[#bd8a8e]"></span></button>
    <button aria-label="Photos" class="relative grid size-[50px] place-items-center rounded-md bg-[#83434a]"><svg class="size-[30px]" viewBox="0 0 30 30"><rect x="2" y="2" width="26" height="26" rx="3" fill="url(#gp)"/><path d="M2 22 13.500 12q1.500-1 3 0L28 23v5H2z" fill="#1c7fd6"/><path d="m3 27 12-14q2-2 4 0l3 3L11 28H4z" fill="#35c7f4"/><circle cx="21.500" cy="6.500" r="2.500" fill="#e8f1fb"/></svg><span class="absolute bottom-0 h-1 w-2 rounded-full bg-[#ff99a3]"></span></button>
  </div>

  <div class="flex items-center justify-self-end pr-[26px]">
    <button aria-label="Show hidden icons"><svg class="h-2 w-[14px]" viewBox="0 0 14 8" fill="none" stroke="#fff" stroke-width="1.800"><path d="m1 7 6-6 6 6"/></svg></button>
    <button aria-label="Network, volume and battery" class="ml-[23px] flex items-center gap-[10px]">
      <svg class="h-4 w-5" viewBox="0 0 20 16" fill="none" stroke="#fff" stroke-width="1.500"><path d="M.8 5.500a13 13 0 0 1 18.400 0M3.500 8.500a9.200 9.200 0 0 1 13 0M6.300 11.300a5.200 5.200 0 0 1 7.400 0"/><circle cx="10" cy="14" r="1.700" fill="#fff" stroke="none"/></svg>
      <svg class="h-4 w-5" viewBox="0 0 20 16" fill="none" stroke="#fff" stroke-width="1.300"><path d="M1 5.500v5h3L9 15V1L4 5.500zM12 5l7 7M19 5l-7 7"/></svg>
      <svg class="h-4 w-5" viewBox="0 0 20 16"><path d="M5 3.500h9.500a2.500 2.500 0 0 1 2.500 2.500v6a2.500 2.500 0 0 1-2.500 2.500h-11A2.500 2.500 0 0 1 1 12V8" fill="none" stroke="#fff" stroke-width="1.400"/><path d="M8 5.500h6l1 1v5l-1 1H4l-1-1 3-2zM17.500 7H20v4h-2.500zM3 0 0 7h2l-.5 4L6 4H4l2-4z" fill="#fff"/></svg>
    </button>
    <button class="ml-[21px] w-[69px] text-right text-sm leading-5 text-white"><span class="block">11:31 PM</span><span class="block">1/31/2025</span></button>
    <button aria-label="Notifications" class="ml-[11px]"><svg class="h-5 w-[17px]" viewBox="0 0 17 20" fill="#ff998f"><path d="M8.500 0A6.500 6.500 0 0 0 2 6.500V12L0 15v.8h17V15l-2-3V6.500A6.500 6.500 0 0 0 8.500 0zM5.500 17a3 3 0 0 0 6 0z"/></svg></button>
  </div>
</footer>

<script>
  // Open tabs, left to right, by icon name
  const pinned = "vite fcc code fcc yt gh gh";
  const tabs = "xx yt yt hh hh swirl hh cc xx xx xx xx gh js xx xx gh gh gh bars gh goat ai gh gh gh xx xx xx xx gh ww ai chromeg oai hex gift chair star kk mm goog vv flame gmail globe react goog wg uu ph ph ph sb react gmail gmail globe ph ph framer miro mc miro vite wg wg vitegray globe globe goog mk uu ae az az nf react vite react drive";
  const tab = name => `<button aria-label="Onglet" class="flex h-5 items-center justify-center overflow-hidden border-r border-[#3c3c3c] text-[#58c4dc]"><svg class="h-5 w-4 shrink-0" preserveAspectRatio="xMidYMid slice" viewBox="2 0 16 20"><use href="#${name}" width="20" height="20"/></svg></button>`;
  document.getElementById("pinned").innerHTML = pinned.split(" ").map(tab).join("");
  document.getElementById("tabs").innerHTML = tabs.split(" ").map(tab).join("");
</script>
</body>
</html>
